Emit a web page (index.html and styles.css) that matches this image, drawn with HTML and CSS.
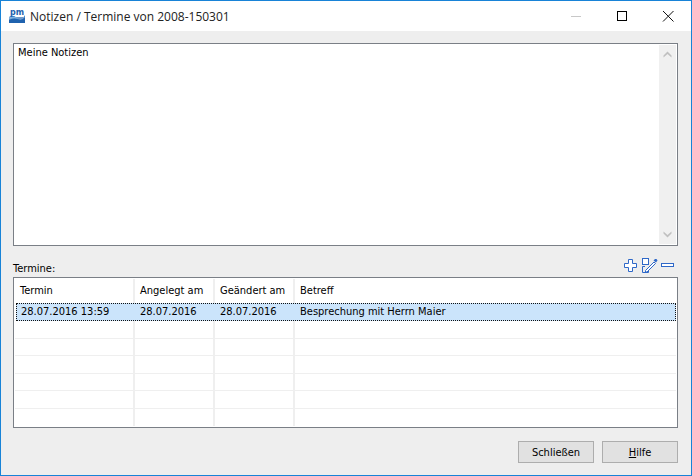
FILE: index.html
```html
<!DOCTYPE html>
<html lang="de">
<head>
<meta charset="utf-8">
<title>Notizen / Termine</title>
<link rel="stylesheet" href="styles.css">
</head>
<body>
<div class="window">
  <header class="titlebar">
    <svg class="app-icon" width="16" height="16" viewBox="0 0 16 16">
      <rect x="0" y="9" width="16" height="6" fill="#1f62ae"/>
      <path d="M0 9 Q4 6 8 10 T16 7 V9 Q12 12 8 11 T0 11Z" fill="#3f87cc"/>
      <path d="M0 12 Q5 9 9 11 T16 9 V9 H0Z" fill="#fff" opacity=".35"/>
      <text x="1" y="7" class="app-icon-text">pm</text>
    </svg>
    <span class="title">Notizen / Termine von 2008-150301</span>
    <div class="winbtns">
      <svg class="winbtn" width="46" height="30" viewBox="0 0 46 30"><path d="M18 15.5H28" stroke="#c8c8c8"/></svg>
      <svg class="winbtn" width="46" height="30" viewBox="0 0 46 30"><rect x="18.5" y="10.5" width="9" height="9" fill="none" stroke="#000"/></svg>
      <svg class="winbtn" width="46" height="30" viewBox="0 0 46 30"><path d="M18 10L28.5 20.5M28.5 10L18 20.5" stroke="#111"/></svg>
    </div>
  </header>
  <main class="content">
    <div class="notes">
      <div class="notes-text">Meine Notizen</div>
      <div class="scrollbar">
        <svg width="17" height="17" viewBox="0 0 17 17"><path d="M4.5 10.5L8.5 6.5L12.5 10.5V12.5L8.5 9L4.5 12.5Z" fill="#c0c0c0"/></svg>
        <svg width="17" height="17" viewBox="0 0 17 17"><path d="M4.5 6.5L8.5 10.5L12.5 6.5V4.5L8.5 8L4.5 4.5Z" fill="#c0c0c0"/></svg>
      </div>
    </div>
    <div class="section-head">
      <span class="section-label">Termine:</span>
      <div class="tools">
        <svg width="16" height="16" viewBox="0 0 16 16"><path d="M5.5 1.5H9.5V5.5H13.5V9.5H9.5V13.5H5.5V9.5H1.5V5.5H5.5Z" fill="#fff" stroke="#2f68c8"/></svg>
        <svg width="17" height="16" viewBox="0 0 17 16"><rect x="1.5" y="0.5" width="6" height="6" fill="#fff" stroke="#2f68c8"/><path d="M1.5 8.5H4M7.5 14.5H1.5V8.5M7.5 12V14.5" fill="none" stroke="#2f68c8"/><path d="M4.5 12.5L13 4L14.5 5.5L6 14H4.5Z" fill="#fff" stroke="#2f68c8"/><path d="M12.5 2.5L14 1H15.5L16.5 2.5L15 4.5Z" fill="#2f68c8"/></svg>
        <svg width="15" height="16" viewBox="0 0 15 16"><rect x="1.5" y="5.5" width="12" height="3" fill="#fff" stroke="#2f68c8"/></svg>
      </div>
    </div>
    <div class="table">
      <div class="row head"><div class="c c1">Termin</div><div class="c c2">Angelegt am</div><div class="c c3">Geändert am</div><div class="c c4">Betreff</div></div>
      <div class="row selected"><div class="c c1">28.07.2016 13:59</div><div class="c c2">28.07.2016</div><div class="c c3">28.07.2016</div><div class="c c4">Besprechung mit Herrn Maier</div></div>
      <div class="row"><div class="c c1"></div><div class="c c2"></div><div class="c c3"></div><div class="c c4"></div></div>
      <div class="row"><div class="c c1"></div><div class="c c2"></div><div class="c c3"></div><div class="c c4"></div></div>
      <div class="row"><div class="c c1"></div><div class="c c2"></div><div class="c c3"></div><div class="c c4"></div></div>
      <div class="row"><div class="c c1"></div><div class="c c2"></div><div class="c c3"></div><div class="c c4"></div></div>
      <div class="row"><div class="c c1"></div><div class="c c2"></div><div class="c c3"></div><div class="c c4"></div></div>
      <div class="row last"><div class="c c1"></div><div class="c c2"></div><div class="c c3"></div><div class="c c4"></div></div>
    </div>
    <div class="actions">
      <button class="btn" type="button">Schließen</button>
      <button class="btn" type="button"><u>H</u>ilfe</button>
    </div>
  </main>
</div>
</body>
</html>
```
FILE: styles.css
```css
* { box-sizing: border-box; }
html, body { margin: 0; padding: 0; }
body {
  width: 692px;
  height: 476px;
  overflow: hidden;
  font-family: "DejaVu Sans Condensed", "DejaVu Sans", sans-serif;
  font-size: 11px;
  color: #000;
}
.window {
  width: 692px;
  height: 476px;
  border: 1px solid #1883d7;
  display: flex;
  flex-direction: column;
  background: #eeeeee;
}
.titlebar {
  height: 30px;
  flex: none;
  background: #fff;
  display: flex;
  align-items: center;
  padding-left: 8px;
}
.app-icon { flex: none; margin-right: 5px; }
.app-icon-text { font: bold 8px "DejaVu Sans", sans-serif; fill: #1f62ae; }
.title {
  font-family: "Open Sans", sans-serif;
  font-size: 12px;
  color: #222;
  flex: 1;
}
.winbtns { display: flex; }
.winbtn { display: block; }
.content {
  flex: 1;
  display: flex;
  flex-direction: column;
  padding: 12px 13px 12px 12px;
}
.notes {
  height: 203px;
  flex: none;
  background: #fff;
  border: 1px solid #7a7f86;
  display: flex;
}
.notes-text { flex: 1; padding: 2px 4px; line-height: 14px; }
.scrollbar {
  width: 17px;
  flex: none;
  background: #f0f0f0;
  display: flex;
  flex-direction: column;
  justify-content: space-between;
  margin: 1px;
  margin-left: 0;
}
.scrollbar svg { display: block; }
.section-head {
  height: 31px;
  flex: none;
  display: flex;
  align-items: flex-end;
  justify-content: space-between;
  padding-bottom: 2px;
}
.section-label { line-height: 13px; padding-bottom: 0; }
.tools { display: flex; gap: 2px; padding-right: 3px; padding-bottom: 1px; }
.tools svg { display: block; }
.table {
  height: 151px;
  flex: none;
  background: #fff;
  border: 1px solid #7a7f86;
  padding: 1px;
  overflow: hidden;
}
.row {
  display: flex;
  height: 17.5px;
  border-bottom: 1px solid #efefef;
  line-height: 16px;
}
.row.head { height: 24px; line-height: 24px; border-bottom: 0; }
.row.last { border-bottom: 0; }
.c { height: 100%; padding-left: 5px; border-right: 2px solid #efefef; white-space: nowrap; }
.c1 { width: 120px; padding-left: 5px; }
.c2 { width: 80px; }
.c3 { width: 80px; }
.c4 { flex: 1; border-right: 0; }
.row.selected {
  height: 18px;
  background: #cbe4fb;
  outline: 1px dotted #111;
  outline-offset: -1px;
  margin-left: 1px;
  line-height: 17px;
  border-bottom: 0;
}
.row.selected .c { border-right-color: #cbe4fb; }
.row.selected .c1 { width: 119px; }
.actions {
  display: flex;
  justify-content: flex-end;
  gap: 8px;
  margin-top: 13px;
}
.btn {
  width: 76px;
  height: 22px;
  background: #e1e1e1;
  border: 1px solid #adadad;
  font: inherit;
  color: #000;
  padding: 0;
}
```
